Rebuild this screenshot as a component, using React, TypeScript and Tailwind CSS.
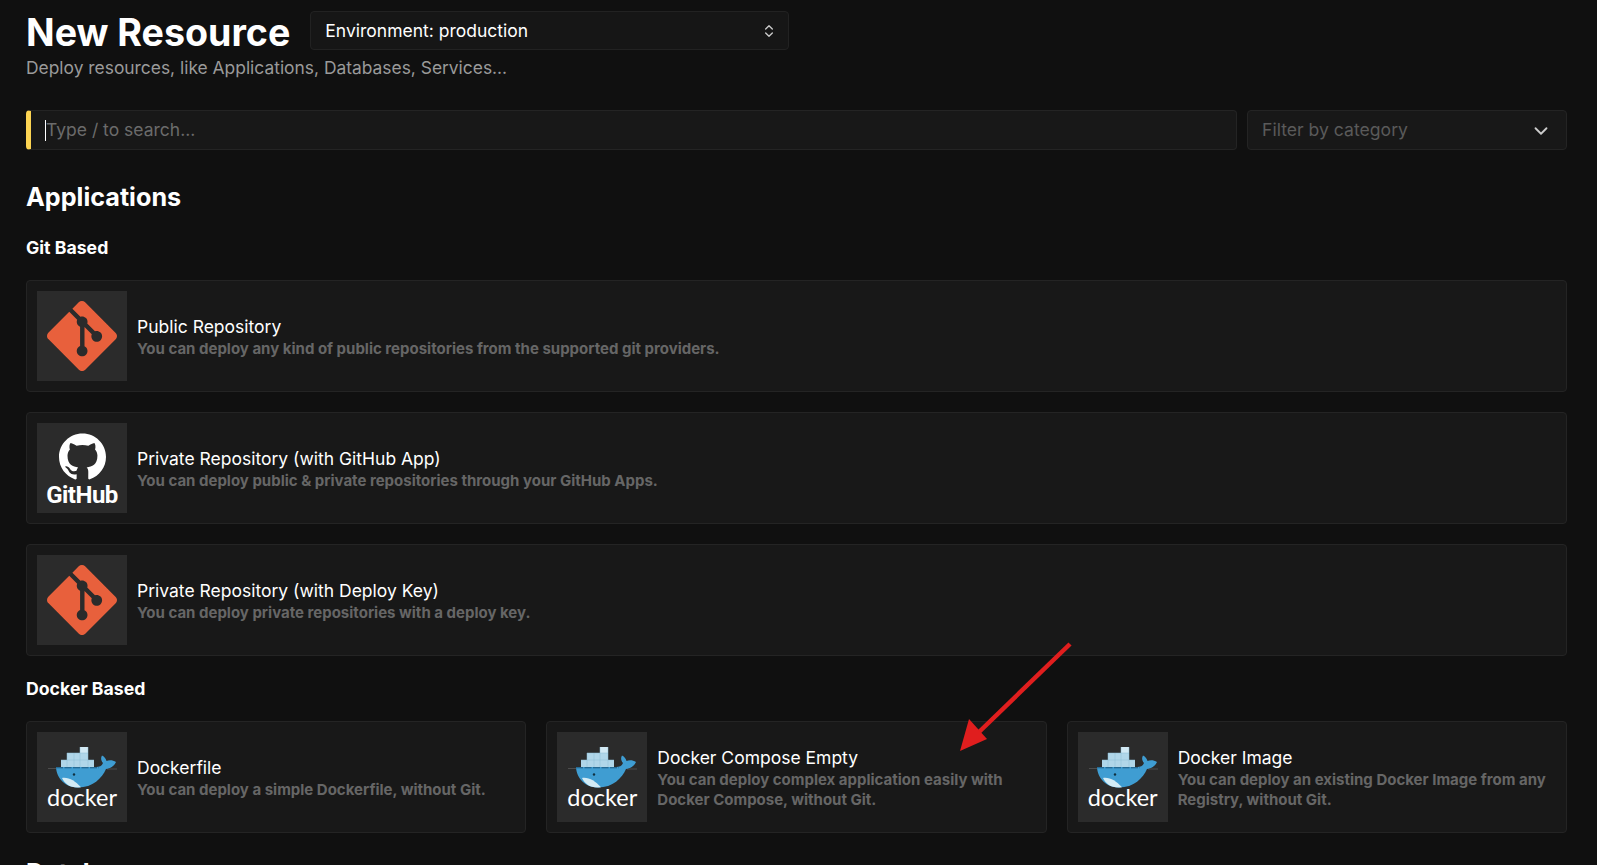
import { ChevronDown, ChevronsUpDown } from 'lucide-react'
import { SiGit, SiGithub } from 'react-icons/si'

function GitLogo() {
  return <SiGit className="w-[70px] h-[70px] text-[#e8603c]" />
}

function GithubLogo() {
  return (
    <div className="flex flex-col items-center gap-[2px] pt-[4px]">
      <SiGithub className="w-[47px] h-[47px] text-white" />
      <span className="font-bold text-[24px] leading-[26px] tracking-[-0.5px] text-white font-['Roboto',sans-serif]">GitHub</span>
    </div>
  )
}

function DockerLogo() {
  return (
    <div className="relative w-[90px] h-[90px] overflow-hidden">
      <svg viewBox="0 0 90 90" className="absolute inset-0 w-full h-full">
        <path d="M24 28 H30 V21 H43 V15 H51 V28 H57 V36 H24 Z" fill="#b0d6e9" />
        <path d="M43 15 H51 V21 H43 Z" fill="#d2e9f4" />
        <path d="M24 28 H57 M30 21 H51 M30 21 V36 M37 21 V36 M43 15 V36 M51 15 V36" stroke="#8fbdd6" strokeWidth="0.5" fill="none" />
        <path d="M11 36.5H19M70 37H80" stroke="#5c5c5c" strokeWidth="0.7" />
        <path d="M19 35 H59 C62 35 65 34 66 31 C 64 29 63.5 26 65 23.5 C 67.5 24.5 69 27 69.5 29 C 72 28 76 28 79 30 C 77 34.5 73 36.5 69 37 C 65 46 56 55.5 41 55.5 C 29 55.5 19.5 47 19 35Z" fill="#3f9dd2" />
        <path d="M25 46 C 32 45 38 49 44 55.3 C 33 56.5 28 52 25 46 Z" fill="#d3ebf5" />
        <path d="M19 35.8 H62" stroke="#1c5a80" strokeWidth="1.1" strokeDasharray="7 1.5" />
        <circle cx="37" cy="42.5" r="1.2" fill="#10303f" />
      </svg>
      <span className="absolute left-0 right-0 top-[50px] text-center text-[23.5px] leading-[30px] text-white font-['Lato',sans-serif] font-normal">docker</span>
    </div>
  )
}

function Card({ logo, title, text }: { logo: React.ReactNode; title: string; text: React.ReactNode }) {
  return (
    <div className="flex items-center gap-2.5 h-[112px] p-2.5 bg-[#181818] border border-[#242424] rounded">
      <div className="w-[90px] h-[90px] shrink-0 bg-[#2b2b2b] flex items-center justify-center">{logo}</div>
      <div className="min-w-0 pt-[1px]">
        <div className="text-[17.5px] leading-[24px] text-white">{title}</div>
        <div className="text-[15px] leading-[20px] font-bold text-[#666666]">{text}</div>
      </div>
    </div>
  )
}

export default function App() {
  return (
    <div className="relative h-[865px] overflow-hidden bg-[#101010] pl-[26px] pr-[30px] font-['Inter',sans-serif]">
      {/* Header */}
      <div className="flex items-start gap-[20px] pt-[11px]">
        <h1 className="text-[37.6px] leading-[44px] font-bold text-white">New Resource</h1>
        <div className="w-[479px] h-[39px] flex items-center justify-between pl-[14px] pr-[11px] pt-[1px] bg-[#161616] border border-[#222222] rounded text-[17.5px] text-white">
          <span>Environment: production</span>
          <ChevronsUpDown className="w-4 h-4 text-[#cccccc]" />
        </div>
      </div>
      <p className="text-[17.4px] leading-[24px] mt-[1px] text-[#9a9a9a]">Deploy resources, like Applications, Databases, Services...</p>

      {/* Search */}
      <div className="flex gap-[10px] mt-[30px]">
        <div className="flex-1 h-[40px] flex items-center pt-[1px] bg-[#181818] border border-[#242424] border-l-[5px] border-l-[#fcd452] rounded pl-[14px]">
          <span className="w-px h-[21px] bg-white" />
          <span className="text-[17.5px] text-[#6b6b6b]">Type / to search...</span>
        </div>
        <div className="w-[320px] h-[40px] flex items-center justify-between pt-[1px] bg-[#181818] border border-[#242424] rounded pl-[14px] pr-[14px]">
          <span className="text-[17.6px] text-[#5a5a5a]">Filter by category</span>
          <ChevronDown className="w-[22px] h-[22px] text-[#cccccc]" />
        </div>
      </div>

      {/* Applications */}
      <h2 className="text-[25.2px] leading-[32px] font-bold text-white mt-[31px]">Applications</h2>
      <h3 className="text-[17.7px] leading-[24px] font-bold text-white mt-[23px]">Git Based</h3>
      <div className="flex flex-col gap-5 mt-[20px]">
        <Card logo={<GitLogo />} title="Public Repository" text="You can deploy any kind of public repositories from the supported git providers." />
        <Card logo={<GithubLogo />} title="Private Repository (with GitHub App)" text="You can deploy public & private repositories through your GitHub Apps." />
        <Card logo={<GitLogo />} title="Private Repository (with Deploy Key)" text="You can deploy private repositories with a deploy key." />
      </div>

      <h3 className="text-[17.7px] leading-[24px] font-bold text-white mt-[21px]">Docker Based</h3>
      <div className="grid grid-cols-3 gap-5 mt-[20px]">
        <Card logo={<DockerLogo />} title="Dockerfile" text="You can deploy a simple Dockerfile, without Git." />
        <Card logo={<DockerLogo />} title="Docker Compose Empty" text="You can deploy complex application easily with Docker Compose, without Git." />
        <Card logo={<DockerLogo />} title="Docker Image" text="You can deploy an existing Docker Image from any Registry, without Git." />
      </div>

      <h2 className="text-[25.2px] leading-[32px] font-bold text-white mt-[24px]">Databases</h2>

      {/* Red annotation arrow */}
      <svg viewBox="0 0 1597 865" className="absolute inset-0 w-[1597px] h-[865px] pointer-events-none">
        <path d="M1070 644 L978 733" stroke="#e01e1e" strokeWidth="4.5" />
        <path d="M960 751 L969 719 L987 739 Z" fill="#e01e1e" />
      </svg>
    </div>
  )
}
